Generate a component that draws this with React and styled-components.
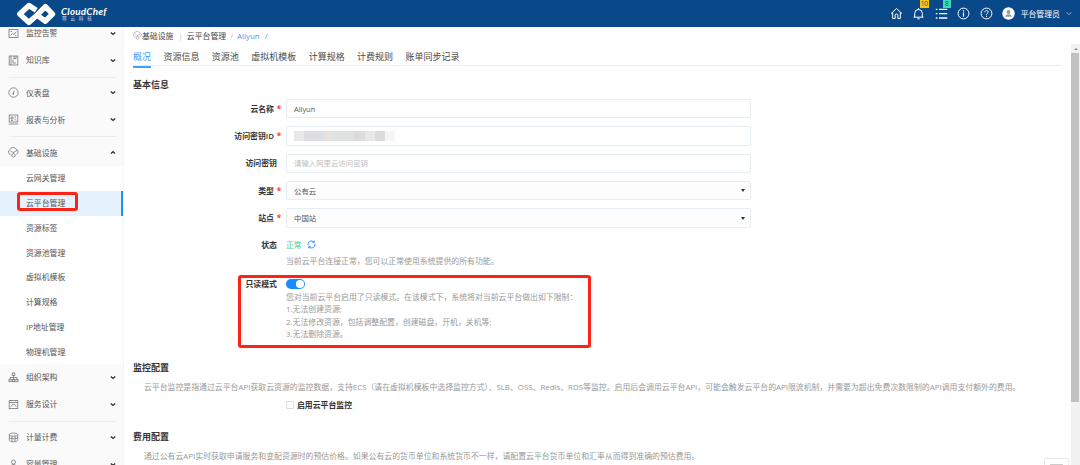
import React from 'react';
import styled, { createGlobalStyle } from 'styled-components';

const GlobalStyle = createGlobalStyle`
  * {
    box-sizing: border-box;
  }

  body {
    margin: 0;
    overflow: hidden;
    background: #fff;
    font-family: "Open Sans", "Noto Sans CJK SC", sans-serif;
    font-size: 7.88px;
    color: #555;
  }
`;

const Page = styled.div`
  display: flex;
  flex-direction: column;
  width: 1080px;
  height: 465px;
  overflow: hidden;
`;

const Header = styled.header`
  flex: none;
  display: flex;
  align-items: center;
  justify-content: space-between;
  height: 27px;
  padding: 0 8.5px 0 16px;
  background: #09498a;
  color: #fff;
`;

const Brand = styled.div`
  display: flex;
  align-items: center;
  gap: 5px;
`;

const BrandText = styled.div`
  display: flex;
  flex-direction: column;
  margin-top: -1px;
`;

const BrandName = styled.span`
  font-family: Lato, sans-serif;
  font-size: 9.8px;
  font-style: italic;
  font-weight: 700;
  line-height: 10px;
  letter-spacing: 0.25px;
`;

const BrandSub = styled.span`
  font-size: 4.6px;
  line-height: 5px;
  letter-spacing: 3.8px;
  padding-left: 1px;
  opacity: 0.8;
`;

const HeaderTools = styled.div`
  display: flex;
  align-items: center;
  gap: 9.5px;
`;

const Tool = styled.span`
  position: relative;
  display: flex;
  width: 13px;
  height: 13px;

  svg {
    width: 13px;
    height: 13px;
  }
`;

const Badge = styled.span`
  position: absolute;
  top: -7px;
  left: 8px;
  display: flex;
  justify-content: center;
  width: 8.5px;
  height: 8px;
  overflow: hidden;
  background: ${props => props.color};
  color: #34506a;
  font-size: 6.5px;
  line-height: 8px;
`;

const Account = styled.div`
  display: flex;
  align-items: center;
  gap: 5.5px;
  line-height: 12px;
`;

const Body = styled.div`
  flex: 1;
  display: flex;
  min-height: 0;
`;

const Sidebar = styled.nav`
  flex: none;
  width: 124px;
  height: 438px;
  overflow: hidden;
  background: #fafafa;
  border-right: 1px solid #f6f6f6;
`;

const MenuList = styled.div`
  margin-top: -7.4px;
`;

const MenuItem = styled.div`
  display: flex;
  align-items: center;
  height: 27px;
  padding: 0 7px 0 8px;
  line-height: 12px;
`;

const MenuIcon = styled.svg`
  flex: none;
  width: ${props => (props.$small ? '9px' : '11px')};
  height: ${props => (props.$small ? '9px' : '11px')};
  margin-right: ${props => (props.$small ? '0.5px' : '7px')};
  margin-left: ${props => (props.$small ? '-0.5px' : '0')};
  fill: none;
  stroke: ${props => (props.$small ? '#999' : '#777')};
  stroke-width: 0.8;
`;

const MenuLabel = styled.span`
  flex: 1;
`;

const Divider = styled.div`
  height: 5.75px;
  padding: 3px 6px 0 9px;

  &::after {
    content: '';
    display: block;
    border-top: 1px solid #ececec;
  }
`;

const SubMenu = styled.div`
  background: #fff;
`;

const SubItem = styled.div`
  position: relative;
  display: flex;
  align-items: center;
  height: 24.72px;
  padding-left: 26px;
  line-height: 12px;
  background: ${props => (props.$active ? '#e6f3ff' : '#fff')};
  border-right: 2px solid ${props => (props.$active ? '#1890ff' : '#fff')};
`;

// red frame drawn over the highlighted areas
const Marker = styled.span`
  position: absolute;
  top: ${props => props.top};
  left: ${props => props.left};
  width: ${props => props.width};
  height: ${props => props.height};
  border: 3px solid #fb2318;
  border-radius: 3px;
`;

const Main = styled.main`
  flex: 1;
  min-width: 0;
  padding: 2.5px 9px 0;
`;

const Breadcrumb = styled.div`
  display: flex;
  align-items: center;
  height: 12px;
  line-height: 12px;
`;

const Crumb = styled.span`
  color: ${props => props.$muted ? '#bbb' : props.$link ? '#4a9bf5' : '#444'};
  margin-right: ${props => props.gap || '4px'};
`;

const Tabs = styled.div`
  display: flex;
  gap: 12.4px;
  height: 19.5px;
  margin-top: 5px;
  border-bottom: 1px solid #ebeff3;
`;

const Tab = styled.span`
  height: 21px;
  line-height: 19px;
  font-size: 9px;
  color: ${props => (props.$active ? '#409eff' : '#4a4a4a')};
  border-bottom: 2px solid ${props => (props.$active ? '#409eff' : 'transparent')};
`;

const SectionTitle = styled.h3`
  margin: ${props => props.top || '0'} 0 0;
  font-size: 9px;
  font-weight: 600;
  line-height: 14px;
  color: #333;
`;

const Form = styled.div`
  display: flex;
  flex-direction: column;
  gap: 7.4px;
  margin-top: 7px;
`;

const FormRow = styled.div`
  display: flex;
  align-items: center;
  height: 20px;
`;

const Label = styled.label`
  flex: none;
  display: flex;
  justify-content: flex-end;
  width: 148px;
  margin-right: 5px;
  font-weight: 600;
  line-height: 12px;
  color: #333;
`;

const Required = styled.i`
  width: 7px;
  padding-left: 2.5px;
  color: #ff2a2a;
  font-size: 9px;
  font-style: normal;
`;

const NoMark = styled.span`
  width: 4px;
`;

const Field = styled.div`
  display: flex;
  align-items: center;
  justify-content: space-between;
  width: 465px;
  height: 19.5px;
  padding: 0 5.5px 0 7px;
  border: 1px solid #e6edf3;
  border-radius: 2px;
  background: ${props => (props.$select ? '#fdfdfd' : '#fff')};
  color: ${props => (props.$empty ? '#bdbdbd' : '#555')};
  font-size: 7.4px;
  line-height: 12px;
`;

const Caret = styled.span`
  border: 2.5px solid transparent;
  border-top: 3px solid #333;
  border-bottom: 0;
`;

const Mosaic = styled.span`
  display: flex;
  height: 10px;
`;

const MosaicCell = styled.span`
  width: ${props => props.width};
  background: ${props => props.color};
`;

const StatusRow = styled(FormRow)`
  height: 14px;
  margin-top: 9.5px;
`;

const StatusText = styled.span`
  margin-right: 5px;
  color: #4ccb7c;
  line-height: 12px;
`;

const Hint = styled.div`
  margin-left: 153px;
  padding-top: ${props => props.top || '0'};
  line-height: 12.5px;
  color: #999;
`;

const ReadOnlyBlock = styled.div`
  position: relative;
  height: 73px;
  margin-top: 8px;
`;

const SwitchRow = styled(FormRow)`
  height: 15.5px;
  padding-top: 2.5px;
`;

const Switch = styled.span`
  display: flex;
  justify-content: flex-end;
  width: 18.5px;
  height: 9.5px;
  padding: 1px;
  border-radius: 5px;
  background: #1a8cff;

  &::after {
    content: '';
    width: 7.5px;
    height: 7.5px;
    border-radius: 50%;
    background: #fff;
  }
`;

const SectionText = styled.p`
  margin: 6px 0 0 11px;
  line-height: 13px;
  color: #999;
  white-space: nowrap;
`;

const CheckRow = styled.div`
  display: flex;
  align-items: center;
  height: 12px;
  margin: 5px 0 0 153px;
  font-weight: 600;
  line-height: 12px;
  color: #333;
`;

const CheckBox = styled.span`
  width: 8px;
  height: 8px;
  margin-right: 3px;
  border: 1px solid #ddd;
  border-radius: 1px;
`;

const ScrollColumn = styled.div`
  flex: none;
  width: 9px;
  height: 421px;
  margin-top: 17px;
  background: #f1f1f1;
`;

const ScrollArrow = styled.div`
  display: flex;
  align-items: center;
  justify-content: center;
  height: 9px;

  &::after {
    content: '';
    border: 2px solid transparent;
    border-top: 0;
    border-bottom-color: #888;
  }
`;

const ScrollThumb = styled.div`
  width: 8px;
  height: 349px;
  background: #c1c1c1;
`;

const FloatButton = styled.div`
  position: absolute;
  top: 458px;
  left: 1044px;
  width: 25px;
  height: 20px;
  padding: 5px 5px 0;
  border: 1px solid #e8e8e8;
  border-radius: 2px;
  background: #fff;

  &::after {
    content: '';
    display: block;
    height: 6px;
    background: #ccc;
  }
`;

const Clip = styled.div`
  position: relative;
  width: 1080px;
  height: 465px;
  overflow: hidden;
`;

const icons = {
  alert: <><rect x="1" y="1.5" width="9" height="8" /><path d="M2.5 7.5l2-2 1.5 1 2.5-3M2.5 3.5h1.5M7 7.8h1.5" /></>,
  book: <><rect x="1.2" y="1" width="8.6" height="9" /><path d="M3 1v9M5 4.5v3.5h3M6 1v3l1-.8 1 .8V1" /></>,
  gauge: <><circle cx="5.5" cy="5.5" r="4.7" /><path d="M5 7.2l1.3-3.6M5 5.5v1.7h1" /></>,
  report: <><rect x="1.2" y="1" width="8.6" height="7" /><path d="M.8 10h9.4M3 3h2v2H3zM3 6.5h2M6.5 3H8M6.5 5l1.8 1.5" /></>,
  cloud: <><path d="M2.8 7.3A2.3 2.3 0 0 1 2 2.8 3.2 3.2 0 0 1 8 2.2a2.6 2.6 0 0 1 .4 5" /><path d="M2.5 4.2l3 1.3L9 3.5M5.5 5.5v1.2M3.8 7.6l1.7-1 1.7 1v1.6l-1.7 1-1.7-1z" /></>,
  org: <><rect x="4.2" y="1" width="2.6" height="2.4" /><rect x="1" y="7.3" width="2.2" height="2.4" /><rect x="4.4" y="7.3" width="2.2" height="2.4" /><rect x="7.8" y="7.3" width="2.2" height="2.4" /><path d="M5.5 3.4v3.9M2.1 7.3V5.5h6.8v1.8" /></>,
  design: <><rect x="1.2" y="1.6" width="8.6" height="8" /><path d="M1.2 3.5h8.6M2.8 7.8l1.7-2.5h2l1.7 2.5M3.2 1v1.3M7.8 1v1.3" /></>,
  meter: <><ellipse cx="5.5" cy="2.6" rx="4.2" ry="1.6" /><path d="M1.3 2.6v5.6c0 2.1 8.4 2.1 8.4 0V2.6M1.3 5.2c0 2 8.4 2 8.4 0M4 4v5.5M7 4v5.5" /></>,
  capacity: <><circle cx="5.5" cy="3" r="2" /><path d="M4.5 5L2 10h7L6.5 5M5.5 5v4" /></>,
};

const subItems = ['云网关管理', '云平台管理', '资源标签', '资源池管理', '虚拟机模板', '计算规格', 'IP地址管理', '物理机管理'];

const tabs = ['概况', '资源信息', '资源池', '虚拟机模板', '计算规格', '计费规则', '账单同步记录'];

const mosaic = [
  ['10px', '#e8e8e8'],
  ['10px', '#dddddf'],
  ['10px', '#dcdfe2'],
  ['10px', '#e4e1df'],
  ['20px', '#dfe1e1'],
  ['11px', '#dbdbda'],
  ['10px', '#e8e8e9'],
  ['10px', '#dcdcdc'],
  ['10px', '#f4f6f6'],
];

const Chevron = ({ up }) => (
  <svg width="6" height="5" viewBox="0 0 6 5" fill="none" stroke="#333" strokeWidth="1.4">
    <path d={up ? 'M1 3.6L3 1.8l2 1.8' : 'M.8 1.4L3 3.4l2.2-2'} />
  </svg>
);

const MenuEntry = ({ icon, label, open }) => (
  <MenuItem>
    <MenuIcon viewBox="0 0 11 11">{icons[icon]}</MenuIcon>
    <MenuLabel>{label}</MenuLabel>
    <Chevron up={open} />
  </MenuItem>
);

const FieldRow = ({ label, required, children, ...rest }) => (
  <FormRow>
    <Label>{label}{required ? <Required>*</Required> : <NoMark />}</Label>
    <Field {...rest}>{children}</Field>
  </FormRow>
);

const TopBar = () => (
  <Header>
    <Brand>
      <svg width="40" height="24" viewBox="16 1.5 40 24" fill="none" stroke="#fff" strokeWidth="5.4" strokeLinejoin="round">
        <path d="M36.2 9.8L29 5l-9.2 8.5 9 8.4 9.2-8.2 7.4-7.6 7.1 7.4-7.1 7.2-6.7-4.8" />
      </svg>
      <BrandText>
        <BrandName>CloudChef</BrandName>
        <BrandSub>骞云科技</BrandSub>
      </BrandText>
    </Brand>
    <HeaderTools>
      <Tool>
        <svg viewBox="0 0 13 13" fill="none" stroke="#fff" strokeWidth="1">
          <path d="M1 6.7L6.5 1.5 12 6.7M2.7 5.4v6.1h2.5V8.2c0-1.8 2.6-1.8 2.6 0v3.3h2.5V5.4" />
        </svg>
      </Tool>
      <Tool>
        <svg viewBox="0 0 13 13" fill="none" stroke="#fff" strokeWidth="1">
          <path d="M1.5 10.2h10M2.7 10.2V6.3a3.8 3.8 0 0 1 7.6 0v3.9M5.3 11.8h2.4M6.5 1.2v1.3" />
        </svg>
        <Badge color="#f3c70c">10</Badge>
      </Tool>
      <Tool>
        <svg viewBox="0 0 13 13" fill="none" stroke="#fff" strokeWidth="1.3">
          <path d="M.8 2.3h1.6M.8 6.6h1.6M.8 11h1.6M4 2.3h8.3M4 6.6h8.3M4 11h8.3" />
        </svg>
        <Badge color="#3bdcb9">8</Badge>
      </Tool>
      <Tool>
        <svg viewBox="0 0 13 13" fill="none" stroke="#fff" strokeWidth="1">
          <circle cx="6.5" cy="6.5" r="5.4" />
          <path d="M6.5 5.5v4.2M6.5 3.2v1.3" strokeWidth="1.2" />
        </svg>
      </Tool>
      <Tool>
        <svg viewBox="0 0 13 13" fill="none" stroke="#fff" strokeWidth="1">
          <circle cx="6.5" cy="6.5" r="5.4" />
          <path d="M4.8 5.2c0-2.2 3.4-2.2 3.4 0 0 1.2-1.7 1.1-1.7 2.6M6.5 8.8V10" />
        </svg>
      </Tool>
      <Account>
        <svg width="13" height="13" viewBox="0 0 13 13">
          <circle cx="6.5" cy="6.5" r="6.2" fill="#fff" />
          <circle cx="6.5" cy="5" r="1.9" fill="#999" />
          <path d="M3.4 9.7c0-3.2 6.2-3.2 6.2 0z" fill="#999" />
        </svg>
        <span>平台管理员</span>
        <svg width="6" height="5" viewBox="0 0 6 5" fill="none" stroke="#b8cbe0" strokeWidth="0.8">
          <path d="M.7 1.3L3 3.7l2.3-2.4" />
        </svg>
      </Account>
    </HeaderTools>
  </Header>
);

const SideMenu = () => (
  <Sidebar>
    <MenuList>
      <MenuEntry icon="alert" label="监控告警" />
      <MenuEntry icon="book" label="知识库" />
      <Divider />
      <MenuEntry icon="gauge" label="仪表盘" />
      <MenuEntry icon="report" label="报表与分析" />
      <Divider />
      <MenuEntry icon="cloud" label="基础设施" open />
      <SubMenu>
        {subItems.map(item => (
          <SubItem key={item} $active={item === '云平台管理'}>
            {item}
            {item === '云平台管理' && <Marker top="1px" left="17px" width="61px" height="19px" />}
          </SubItem>
        ))}
      </SubMenu>
      <MenuEntry icon="org" label="组织架构" />
      <MenuEntry icon="design" label="服务设计" />
      <Divider />
      <MenuEntry icon="meter" label="计量计费" />
      <MenuEntry icon="capacity" label="容量管理" />
    </MenuList>
  </Sidebar>
);

export default function App() {
  return (
    <Clip>
      <GlobalStyle />
      <Page>
        <TopBar />
        <Body>
          <SideMenu />
          <Main>
            <Breadcrumb>
              <MenuIcon viewBox="0 0 11 11" $small>{icons.cloud}</MenuIcon>
              <Crumb gap="5px">基础设施</Crumb>
              <Crumb $muted gap="4px">|</Crumb>
              <Crumb>云平台管理</Crumb>
              <Crumb $muted>/</Crumb>
              <Crumb $link gap="5px">Aliyun</Crumb>
              <Crumb $link>/</Crumb>
            </Breadcrumb>
            <Tabs>
              {tabs.map((tab, i) => <Tab key={tab} $active={i === 0}>{tab}</Tab>)}
            </Tabs>
            <SectionTitle top="11.5px">基本信息</SectionTitle>
            <Form>
              <FieldRow label="云名称" required>Aliyun</FieldRow>
              <FieldRow label="访问密钥ID" required>
                <Mosaic>
                  {mosaic.map(([width, color], i) => <MosaicCell key={i} width={width} color={color} />)}
                </Mosaic>
              </FieldRow>
              <FieldRow label="访问密钥" $empty>请输入阿里云访问密钥</FieldRow>
              <FieldRow label="类型" required $select>公有云<Caret /></FieldRow>
              <FieldRow label="站点" required $select>中国站<Caret /></FieldRow>
            </Form>
            <StatusRow>
              <Label>状态<NoMark /></Label>
              <StatusText>正常</StatusText>
              <svg width="9" height="9" viewBox="0 0 9 9" fill="none" stroke="#3a8cff" strokeWidth="1">
                <path d="M1 5.2A3.5 3.5 0 0 1 6.8 1.9M8 3.8a3.5 3.5 0 0 1-5.8 3.3" />
                <path d="M7.3.6v1.8H5.5M1.7 8.4V6.6h1.8" />
              </svg>
            </StatusRow>
            <Hint top="3px">当前云平台连接正常，您可以正常使用系统提供的所有功能。</Hint>
            <ReadOnlyBlock>
              <SwitchRow>
                <Label>只读模式<NoMark /></Label>
                <Switch />
              </SwitchRow>
              <Hint>您对当前云平台启用了只读模式。在该模式下，系统将对当前云平台做出如下限制：</Hint>
              <Hint>1.无法创建资源;</Hint>
              <Hint>2.无法修改资源，包括调整配置，创建磁盘，开机，关机等;</Hint>
              <Hint>3.无法删除资源。</Hint>
              <Marker top="0" left="105px" width="353px" height="73px" />
            </ReadOnlyBlock>
            <SectionTitle top="12.5px">监控配置</SectionTitle>
            <SectionText>云平台监控是指通过云平台API获取云资源的监控数据，支持ECS（请在虚拟机模板中选择监控方式）、SLB、OSS、Redis、RDS等监控。启用后会调用云平台API，可能会触发云平台的API限流机制，并需要为超出免费次数限制的API调用支付额外的费用。</SectionText>
            <CheckRow><CheckBox />启用云平台监控</CheckRow>
            <SectionTitle top="19.5px">费用配置</SectionTitle>
            <SectionText>通过公有云API实时获取申请服务和变配资源时的预估价格。如果公有云的货币单位和系统货币不一样，请配置云平台货币单位和汇率从而得到准确的预估费用。</SectionText>
          </Main>
          <ScrollColumn>
            <ScrollArrow />
            <ScrollThumb />
          </ScrollColumn>
        </Body>
      </Page>
      <FloatButton />
    </Clip>
  );
}
